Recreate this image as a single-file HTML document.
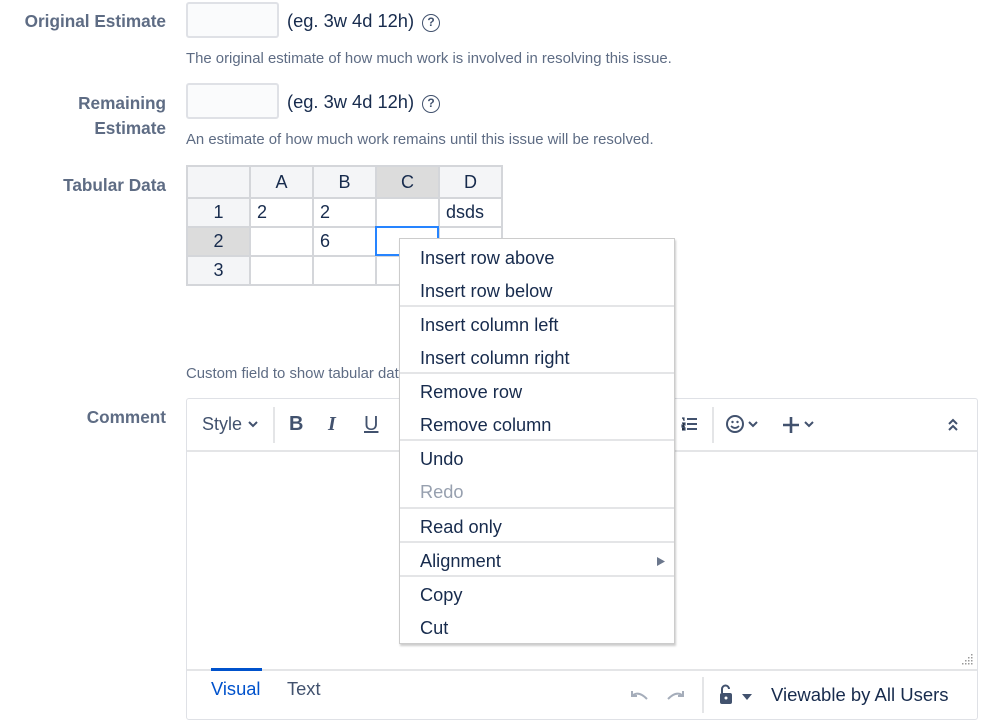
<!DOCTYPE html>
<html><head><style>
*{box-sizing:border-box;margin:0;padding:0}
body{width:999px;height:726px;background:#fff;font-family:"Liberation Sans",sans-serif;position:relative;overflow:hidden;color:#172b4d}
.a{position:absolute;white-space:nowrap}
.lbl{font-size:17.2px;color:#5e6c84;font-weight:bold;text-align:right;right:833px}
.desc{font-size:14.9px;color:#5e6c84}
.inp{position:absolute;left:186px;width:93px;height:36px;border:2px solid #dfe1e6;border-radius:3px;background:#fafbfc}
.hint{font-size:18.3px}
.q{display:inline-block;width:18px;height:18px;border:1.8px solid #42526e;border-radius:50%;font-size:12px;text-align:center;line-height:15px;font-weight:bold;color:#42526e;vertical-align:1px;margin-left:8px}
table{position:absolute;left:186px;top:165px;border-collapse:collapse;font-size:18px}
td{border:2px solid #d4d6da;height:29px;width:63px;padding:0 6px}
tr:first-child td{height:32px;text-align:center;background:#f4f5f7}
td.h{background:#f4f5f7;text-align:center}
td.d{background:#dcdcdc!important}
.menu{position:absolute;left:399px;top:238px;width:276px;height:406px;background:#fff;border:1.5px solid #ccc;box-shadow:1px 2px 2px rgba(0,0,0,.2)}
.mi{position:absolute;left:20px;font-size:18.2px;color:#172b4d}
.sep{position:absolute;left:0;right:0;height:1.5px;background:#e4e5e7}
.ed{position:absolute;left:186px;top:398px;width:792px;height:322px;border:1.5px solid #dfe1e6;border-radius:3px}
.tb{font-size:18px;color:#42526e}
svg{position:absolute}
</style></head><body>
<div class="a lbl" style="top:11px">Original Estimate</div>
<div class="inp" style="top:2px"></div>
<div class="a hint" style="left:287px;top:10px">(eg. 3w 4d 12h)<span class="q">?</span></div>
<div class="a desc" style="left:186px;top:51px">The original estimate of how much work is involved in resolving this issue.</div>

<div class="a lbl" style="top:91px;line-height:25px">Remaining<br>Estimate</div>
<div class="inp" style="top:83px"></div>
<div class="a hint" style="left:287px;top:91px">(eg. 3w 4d 12h)<span class="q">?</span></div>
<div class="a desc" style="left:186px;top:132px">An estimate of how much work remains until this issue will be resolved.</div>

<div class="a lbl" style="top:175px">Tabular Data</div>
<table>
<tr><td></td><td>A</td><td>B</td><td class="d">C</td><td>D</td></tr>
<tr><td class="h">1</td><td>2</td><td>2</td><td></td><td>dsds</td></tr>
<tr><td class="h d">2</td><td></td><td>6</td><td></td><td></td></tr>
<tr><td class="h">3</td><td></td><td></td><td></td><td></td></tr>
</table>
<div style="position:absolute;left:375px;top:226px;width:64px;height:30px;border:2px solid #2684ff"></div>
<div class="a desc" style="left:186px;top:366px">Custom field to show tabular data</div>

<div class="a lbl" style="top:407px">Comment</div>
<div class="ed">
 <div style="position:absolute;left:0;right:0;top:51px;height:1.5px;background:#e4e5e7"></div>
 <div style="position:absolute;left:86px;top:8px;width:1.5px;height:36px;background:#e4e5e7"></div>
 <div style="position:absolute;left:525px;top:8px;width:1.5px;height:36px;background:#e4e5e7"></div>
 <div class="a tb" style="left:15px;top:15px">Style</div>
 <svg style="left:61px;top:21px" width="10" height="8"><path d="M1 2l4 4 4-4" stroke="#42526e" stroke-width="2" fill="none"/></svg>
 <div class="a tb" style="left:102px;top:14px;font-weight:bold;font-size:20px">B</div>
 <div class="a tb" style="left:141px;top:14px;font-style:italic;font-weight:bold;font-size:20px;font-family:'Liberation Serif',serif">I</div>
 <div class="a tb" style="left:177px;top:14px;text-decoration:underline;font-size:20px">U</div>
 <svg style="left:494px;top:18px" width="16" height="14"><g stroke="#42526e" stroke-width="2"><path d="M6 2h10M6 7h10M6 12h10"/></g><g stroke="#42526e" stroke-width="1.2"><path d="M1 1h2v3M1 6h3v2H1v2h3M1 11h3v2H1"/></g></svg>
 <svg style="left:539px;top:16px" width="20" height="20"><circle cx="9" cy="9" r="8" stroke="#42526e" stroke-width="2" fill="none"/><circle cx="6.5" cy="7" r="1.2" fill="#42526e"/><circle cx="11.5" cy="7" r="1.2" fill="#42526e"/><path d="M5 11q4 4 8 0" stroke="#42526e" stroke-width="1.6" fill="none"/></svg>
 <svg style="left:561px;top:21px" width="10" height="8"><path d="M1 2l4 4 4-4" stroke="#42526e" stroke-width="2" fill="none"/></svg>
 <svg style="left:595px;top:17px" width="18" height="18"><path d="M9 1v16M1 9h16" stroke="#42526e" stroke-width="2.6"/></svg>
 <svg style="left:617px;top:21px" width="10" height="8"><path d="M1 2l4 4 4-4" stroke="#42526e" stroke-width="2" fill="none"/></svg>
 <svg style="left:760px;top:19px" width="12" height="14"><path d="M2 6l4-4 4 4M2 12l4-4 4 4" stroke="#42526e" stroke-width="2" fill="none"/></svg>
 <div style="position:absolute;left:0;right:0;top:270px;height:1.5px;background:#e4e5e7"></div>
 <div style="position:absolute;left:24px;top:269px;width:51px;height:3px;background:#0052cc"></div>
 <div class="a" style="left:24px;top:279px;font-size:18.3px;color:#0052cc">Visual</div>
 <div class="a" style="left:100px;top:279px;font-size:18.3px;color:#42526e">Text</div>
 <svg style="left:442px;top:290px" width="20" height="12"><path d="M3 2v5h5M3 7q6-6 15 3" stroke="#a5adba" stroke-width="2" fill="none"/></svg>
 <svg style="left:479px;top:290px" width="20" height="12"><path d="M17 2v5h-5M17 7q-6-6-15 3" stroke="#a5adba" stroke-width="2" fill="none"/></svg>
 <div style="position:absolute;left:515px;top:278px;width:1.5px;height:36px;background:#e4e5e7"></div>
 <svg style="left:531px;top:285px" width="16" height="22"><path d="M4 9V5a3.5 3.5 0 0 1 7 0" stroke="#42526e" stroke-width="2" fill="none"/><rect x="2" y="9" width="12" height="11" rx="2" fill="#42526e"/><circle cx="8" cy="14" r="1.5" fill="#fff"/></svg>
 <svg style="left:555px;top:295px" width="10" height="6"><path d="M0 0h10L5 6z" fill="#42526e"/></svg>
 <div class="a" style="left:584px;top:285px;font-size:18.5px;color:#172b4d">Viewable by All Users</div>
 <svg style="left:775px;top:254px" width="12" height="12"><g fill="#999"><rect x="9" y="1" width="1.5" height="1.5"/><rect x="6" y="4" width="1.5" height="1.5"/><rect x="9" y="4" width="1.5" height="1.5"/><rect x="3" y="7" width="1.5" height="1.5"/><rect x="6" y="7" width="1.5" height="1.5"/><rect x="9" y="7" width="1.5" height="1.5"/><rect x="0" y="10" width="1.5" height="1.5"/><rect x="3" y="10" width="1.5" height="1.5"/><rect x="6" y="10" width="1.5" height="1.5"/><rect x="9" y="10" width="1.5" height="1.5"/></g></svg>
</div>

<div class="menu">
 <div class="mi" style="top:9px">Insert row above</div>
 <div class="mi" style="top:42px">Insert row below</div>
 <div class="sep" style="top:66px"></div>
 <div class="mi" style="top:76px">Insert column left</div>
 <div class="mi" style="top:109px">Insert column right</div>
 <div class="sep" style="top:133px"></div>
 <div class="mi" style="top:143px">Remove row</div>
 <div class="mi" style="top:176px">Remove column</div>
 <div class="sep" style="top:200px"></div>
 <div class="mi" style="top:210px">Undo</div>
 <div class="mi" style="top:243px;color:#97a0af">Redo</div>
 <div class="sep" style="top:268px"></div>
 <div class="mi" style="top:278px">Read only</div>
 <div class="sep" style="top:302px"></div>
 <div class="mi" style="top:312px">Alignment</div>
 <svg style="left:257px;top:318px" width="8" height="9"><path d="M0 0l8 4.5L0 9z" fill="#6b778c"/></svg>
 <div class="sep" style="top:336px"></div>
 <div class="mi" style="top:346px">Copy</div>
 <div class="mi" style="top:379px">Cut</div>
</div>
</body></html>
